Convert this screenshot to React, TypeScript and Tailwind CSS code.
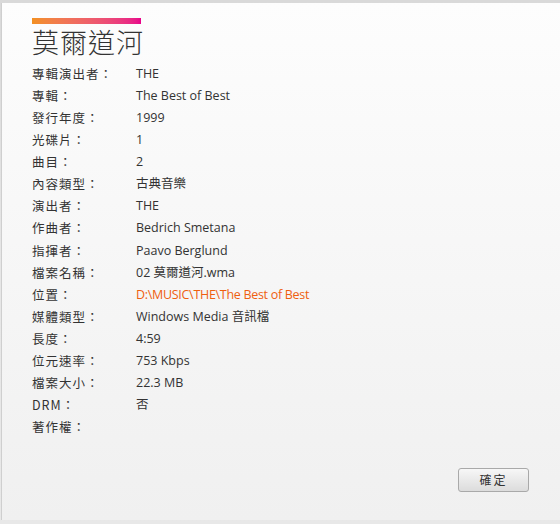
const rows: { label: string; value: string; orange?: boolean }[] = [
  { label: "專輯演出者：", value: "THE" },
  { label: "專輯：", value: "The Best of Best" },
  { label: "發行年度：", value: "1999" },
  { label: "光碟片：", value: "1" },
  { label: "曲目：", value: "2" },
  { label: "內容類型：", value: "古典音樂" },
  { label: "演出者：", value: "THE" },
  { label: "作曲者：", value: "Bedrich Smetana" },
  { label: "指揮者：", value: "Paavo Berglund" },
  { label: "檔案名稱：", value: "02 莫爾道河.wma" },
  { label: "位置：", value: "D:\\MUSIC\\THE\\The Best of Best", orange: true },
  { label: "媒體類型：", value: "Windows Media 音訊檔" },
  { label: "長度：", value: "4:59" },
  { label: "位元速率：", value: "753 Kbps" },
  { label: "檔案大小：", value: "22.3 MB" },
  { label: "DRM：", value: "否" },
  { label: "著作權：", value: "" },
];

export default function App() {
  return (
    <div
      className="w-[560px] h-[524px] bg-gradient-to-b from-[#d9d9d9] via-[#e6e6e6] to-[#e8e8e8] pt-[3px] pl-[1px] pb-[4px] text-[#333]"
      style={{ fontFamily: '"Open Sans", "Noto Sans CJK TC", sans-serif' }}
    >
      <div className="h-full bg-gradient-to-b from-[#fdfdfd] to-[#f0f0f0] border-l border-[#cfcfcf] flex flex-col pl-[30px] pr-[31px]">
        {/* gradient accent */}
        <div className="mt-[15px] w-[109px] h-[6px] bg-gradient-to-r from-[#f39020] to-[#e8008a]"></div>

        <h1
          className="text-[27px] leading-[34px] font-light text-[#333] tracking-[1px] mt-[1px]"
          style={{ fontFamily: '"Noto Sans CJK TC", sans-serif' }}
        >
          莫爾道河
        </h1>

        <div className="mt-[4px] flex flex-col">
          {rows.map((r, i) => (
            <div key={i} className="flex items-center h-[22.12px] text-[12.5px]">
              <div
                className="w-[104px] tracking-[1px] text-[#333]"
                style={{ fontFamily: '"Noto Sans CJK TC", sans-serif' }}
              >
                {r.label}
              </div>
              <div className={r.orange ? "text-[#ef5f10] tracking-[-0.3px]" : "text-[#333]"}>{r.value}</div>
            </div>
          ))}
        </div>

        <div className="mt-auto mb-[28px] flex justify-end">
          <button
            className="w-[71px] h-[24px] rounded-[3px] border border-[#a9a9a9] bg-gradient-to-b from-[#f7f7f7] to-[#dcdcdc] text-[12px] tracking-[2px] text-[#333]"
            style={{ fontFamily: '"Noto Sans CJK TC", sans-serif' }}
          >
            確定
          </button>
        </div>
      </div>
    </div>
  );
}
